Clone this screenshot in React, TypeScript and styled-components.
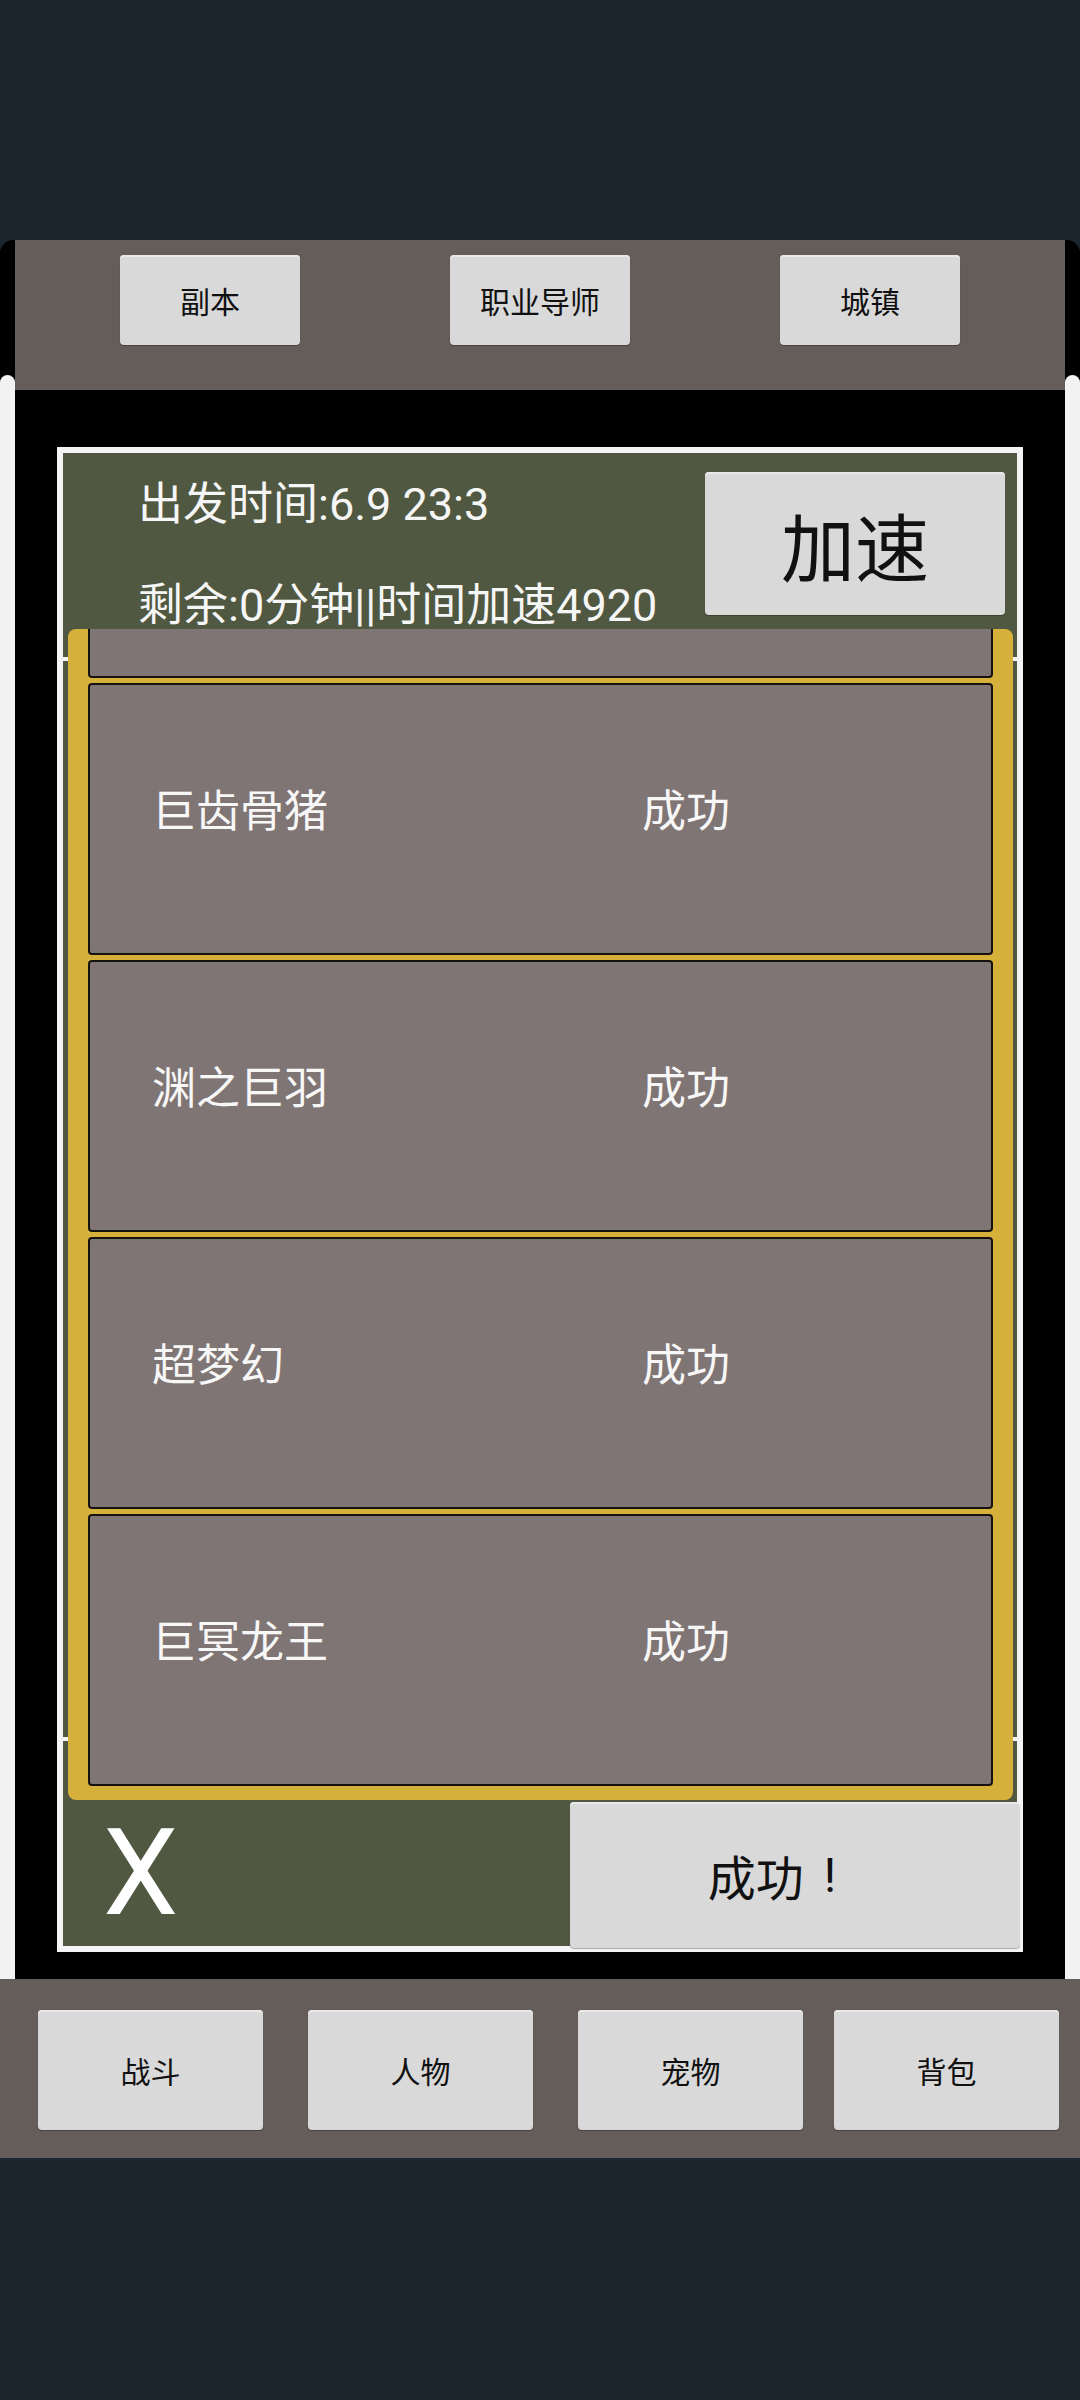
import React from 'react';
import styled, { createGlobalStyle } from 'styled-components';

interface ExpeditionResult {
  id: number;
  name: string;
  status: string;
}

const results: ExpeditionResult[] = [
  { id: 1, name: '巨齿骨猪', status: '成功' },
  { id: 2, name: '渊之巨羽', status: '成功' },
  { id: 3, name: '超梦幻', status: '成功' },
  { id: 4, name: '巨冥龙王', status: '成功' },
];

const topTabs = ['副本', '职业导师', '城镇'];
const bottomTabs = ['战斗', '人物', '宠物', '背包'];

// 列表已经滚动到底部，上面只露出一截
const SCROLL_OFFSET = 223;

const GlobalStyle = createGlobalStyle`
  html, body {
    margin: 0;
    padding: 0;
    background: #1d262f;
  }
  body {
    font-family: Roboto, "Noto Sans CJK SC", sans-serif;
  }
`;

const App: React.FC = () => {
  return (
    <Page>
      <GlobalStyle />
      <Frame>
        <Edge>
          <EdgeTop />
          <EdgeSheet />
        </Edge>
        <Main>
          <TopBar>
            {topTabs.map((tab) => (
              <TopTab key={tab}>{tab}</TopTab>
            ))}
          </TopBar>
          <Stage>
            <Panel>
              <Tick $top={210} $side="left" />
              <Tick $top={210} $side="right" />
              <Tick $top={1290} $side="left" />
              <Tick $top={1290} $side="right" />
              <Header>
                <InfoText>
                  <InfoLine>出发时间:6.9 23:3</InfoLine>
                  <InfoLine>剩余:0分钟||时间加速4920</InfoLine>
                </InfoText>
                <SpeedButton>加速</SpeedButton>
              </Header>
              <ListFrame>
                <ListViewport>
                  <ListTrack $offset={SCROLL_OFFSET}>
                    <ResultRow aria-hidden />
                    {results.map((item) => (
                      <ResultRow key={item.id}>
                        <span>{item.name}</span>
                        <span>{item.status}</span>
                      </ResultRow>
                    ))}
                  </ListTrack>
                </ListViewport>
              </ListFrame>
              <Footer>
                <CloseMark>X</CloseMark>
                <ConfirmButton>
                  成功<Bang>!</Bang>
                </ConfirmButton>
              </Footer>
            </Panel>
          </Stage>
        </Main>
        <Edge>
          <EdgeTop />
          <EdgeSheet />
        </Edge>
      </Frame>
      <BottomBar>
        {bottomTabs.map((tab, i) => (
          <BottomTab key={tab} $nudge={i === bottomTabs.length - 1}>
            {tab}
          </BottomTab>
        ))}
      </BottomBar>
    </Page>
  );
};

// 样式
const Page = styled.div`
  width: 1080px;
  min-height: 2400px;
  padding-top: 240px;
  box-sizing: border-box;
  background: #1d262f;
`;

const Frame = styled.div`
  display: flex;
  border-radius: 14px 14px 0 0;
  overflow: hidden;
  background: #000;
`;

const Edge = styled.div`
  width: 15px;
  flex-shrink: 0;
  display: flex;
  flex-direction: column;
`;

const EdgeTop = styled.div`
  height: 135px;
  background: #000;
`;

const EdgeSheet = styled.div`
  flex: 1;
  background: #f2f2f2;
  border-radius: 8px 8px 0 0;
`;

const Main = styled.div`
  width: 1050px;
  display: flex;
  flex-direction: column;
`;

const TopBar = styled.div`
  height: 150px;
  box-sizing: border-box;
  background: #645d5a;
  display: flex;
  gap: 150px;
  padding: 15px 0 0 105px;
`;

const PlainButton = styled.div`
  display: flex;
  align-items: center;
  justify-content: center;
  box-sizing: border-box;
  background: #d9d9d9;
  border-radius: 4px;
  box-shadow: inset 0 2px 0 #e9e9e9, 0 1px 1px rgba(0, 0, 0, 0.3);
  color: #111;
  font-family: Roboto, "Noto Sans CJK SC", sans-serif;
  white-space: nowrap;
`;

const TopTab = styled(PlainButton)`
  width: 180px;
  height: 90px;
  font-size: 30px;
`;

const Stage = styled.div`
  background: #000;
  padding: 57px 42px 27px;
`;

const Panel = styled.div`
  position: relative;
  border: 6px solid #f4f4f4;
  background: #505841;
  display: flex;
  flex-direction: column;
`;

const Tick = styled.span<{ $top: number; $side: 'left' | 'right' }>`
  position: absolute;
  top: ${({ $top }) => $top - 6}px;
  ${({ $side }) => ($side === 'left' ? 'left: -4px;' : 'right: -5px;')}
  width: 9px;
  height: 4px;
  background: #f4f4f4;
`;

const Header = styled.div`
  height: 176px;
  display: flex;
  justify-content: space-between;
`;

const InfoText = styled.div`
  display: flex;
  flex-direction: column;
  gap: 51px;
  padding: 27px 0 0 75px;
`;

const InfoLine = styled.div`
  height: 50px;
  line-height: 50px;
  font-size: 45px;
  color: #f6f6f6;
  white-space: nowrap;
`;

const SpeedButton = styled(PlainButton)`
  width: 300px;
  height: 143px;
  margin: 19px 12px 0 0;
  font-size: 74px;
`;

const ListFrame = styled.div`
  margin: 0 4px 0 5px;
  padding: 0 20px 14px;
  background: #d5b03a;
  border-radius: 8px;
`;

const ListViewport = styled.div`
  height: 1157px;
  overflow: hidden;
`;

const ListTrack = styled.div<{ $offset: number }>`
  display: flex;
  flex-direction: column;
  gap: 5px;
  margin-top: ${({ $offset }) => -$offset}px;
`;

const ResultRow = styled.div`
  height: 272px;
  flex-shrink: 0;
  box-sizing: border-box;
  border: 2px solid #161212;
  border-radius: 4px;
  background: #807575;
  display: grid;
  grid-template-columns: 490px 1fr;
  align-items: center;
  padding: 0 0 22px 62px;
  font-size: 44px;
  color: #f7f7f7;
`;

const Footer = styled.div`
  height: 146px;
  display: flex;
  justify-content: space-between;
  align-items: center;
`;

const CloseMark = styled.div`
  padding-left: 40px;
  font-size: 120px;
  line-height: 1;
  color: #fff;
`;

const ConfirmButton = styled(PlainButton)`
  align-self: flex-start;
  width: 450px;
  height: 146px;
  margin: 2px -3px 0 0;
  padding-right: 46px;
  font-size: 48px;
`;

const Bang = styled.span`
  margin-left: 20px;
`;

const BottomBar = styled.div`
  height: 179px;
  box-sizing: border-box;
  background: #645d5a;
  display: flex;
  gap: 45px;
  padding: 31px 0 0 38px;
`;

const BottomTab = styled(PlainButton)<{ $nudge?: boolean }>`
  width: 225px;
  height: 120px;
  font-size: 30px;
  margin-left: ${({ $nudge }) => ($nudge ? '-14px' : '0')};
`;

export default App;
